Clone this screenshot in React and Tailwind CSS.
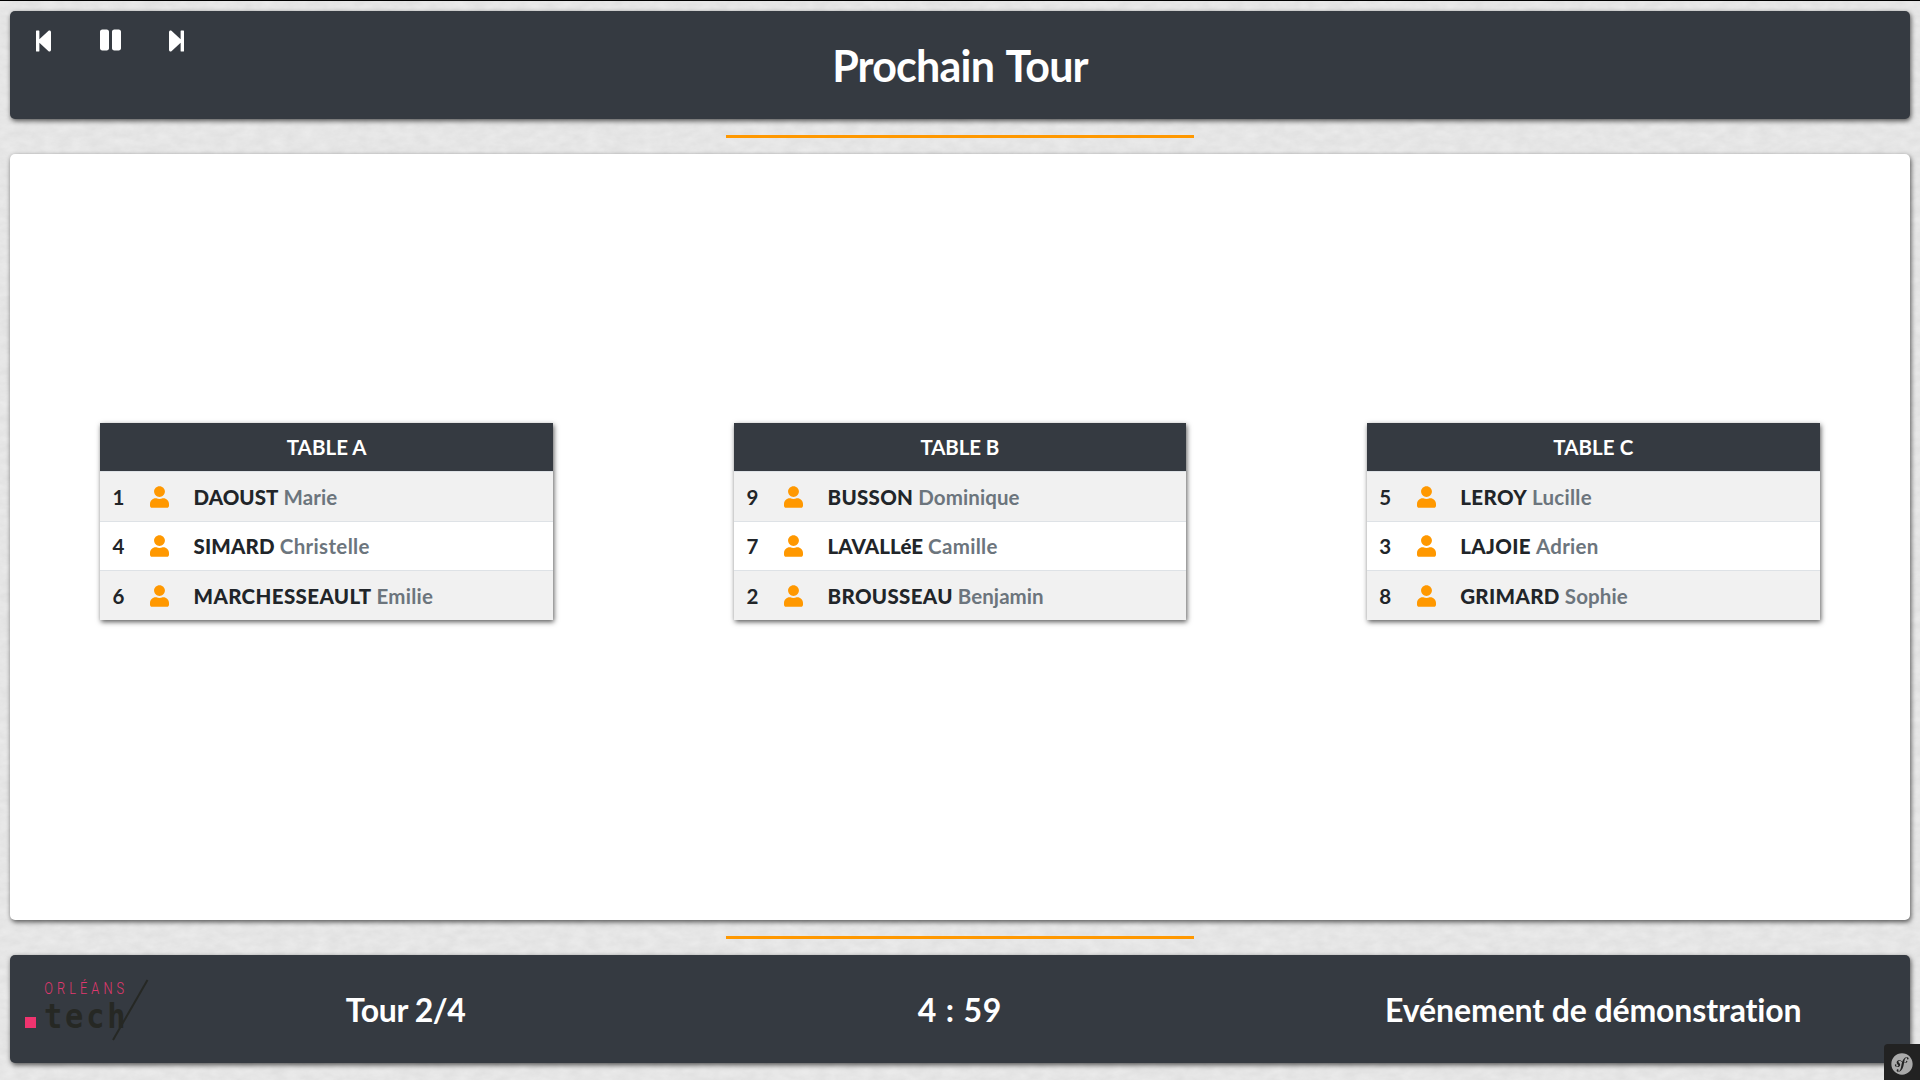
import React from "react";
import { FaStepBackward, FaPause, FaStepForward, FaUser, FaSymfony } from "react-icons/fa";

const tables = [
  {
    title: "TABLE A",
    tracking: "tracking-[0.05px]",
    margin: "mx-[90px]",
    rows: [
      { n: 1, last: "DAOUST", lt: "tracking-[0.05px]", first: "Marie", ft: "tracking-[0.12px]" },
      { n: 4, last: "SIMARD", lt: "tracking-[0.16px]", first: "Christelle", ft: "tracking-[0.34px]" },
      { n: 6, last: "MARCHESSEAULT", lt: "tracking-[0.38px]", first: "Emilie", ft: "tracking-[0.25px]" },
    ],
  },
  {
    title: "TABLE B",
    tracking: "tracking-[-0.1px]",
    margin: "mr-[91px] ml-[90.7px]",
    rows: [
      { n: 9, last: "BUSSON", lt: "tracking-[0.3px]", first: "Dominique", ft: "tracking-[0.09px]" },
      { n: 7, last: "LAVALLéE", lt: "tracking-[0.08px]", first: "Camille", ft: "tracking-[0.3px]" },
      { n: 2, last: "BROUSSEAU", lt: "tracking-[0.34px]", first: "Benjamin", ft: "tracking-[0.06px]" },
    ],
  },
  {
    title: "TABLE C",
    tracking: "tracking-[0.08px]",
    margin: "mx-[90px]",
    rows: [
      { n: 5, last: "LEROY", lt: "tracking-[0.43px]", first: "Lucille", ft: "tracking-[0.25px]" },
      { n: 3, last: "LAJOIE", lt: "tracking-[0.38px]", first: "Adrien", ft: "tracking-[0.25px]" },
      { n: 8, last: "GRIMARD", lt: "tracking-[0.35px]", first: "Sophie", ft: "tracking-[0.12px]" },
    ],
  },
];

const panel = "rounded-[5px] shadow-[1px_2px_5px_rgba(0,0,0,0.65)]";

function PaperTexture() {
  return (
    <svg className="absolute inset-0 h-full w-full" aria-hidden="true">
      <filter id="paper" x="0" y="0" width="100%" height="100%" colorInterpolationFilters="sRGB">
        <feTurbulence type="fractalNoise" baseFrequency="0.07 0.13" numOctaves="5" seed="4" />
        <feColorMatrix values="0.055 0 0 0 0.873  0.055 0 0 0 0.873  0.055 0 0 0 0.873  0 0 0 0 1" />
      </filter>
      <rect width="100%" height="100%" filter="url(#paper)" />
    </svg>
  );
}

function Logo() {
  return (
    <svg className="mt-[21px] ml-[13px] h-[68px] w-[130px] shrink-0" viewBox="23 976 130 68">
      <rect x="25" y="1017" width="11" height="11" fill="#f0346f" />
      <text
        transform="translate(44.2 994) scale(0.8 1)"
        fontFamily="Roboto, sans-serif"
        fontWeight="300"
        fontSize="16"
        letterSpacing="5.1"
        fill="#e0386f"
      >
        ORLÉANS
      </text>
      <text
        transform="translate(44 1028) scale(0.92 1)"
        fontFamily="'DejaVu Sans Mono', monospace"
        fontWeight="700"
        fontSize="33"
        letterSpacing="3.1"
        fill="#262824"
      >
        tech
      </text>
      <path d="M147.5 980 113 1040" stroke="#262824" strokeWidth="2" />
    </svg>
  );
}

function TableCard({ title, tracking, margin, rows }) {
  return (
    <section className={`bg-white shadow-[1px_2px_5px_rgba(0,0,0,0.65)] ${margin}`}>
      <h2 className={`flex h-12 items-center justify-center bg-[#353a41] pt-px text-[20.5px] leading-none text-white ${tracking}`}>
        {title}
      </h2>
      {rows.map((r, i) => (
        <div
          key={r.n}
          className={`flex items-start border-t border-[#dee2e6] pl-[12.5px] text-[20.5px] leading-[22px] text-[#212529] ${
            i % 2 ? "h-[49px] bg-white pt-[13px]" : "h-[50px] bg-[#f1f1f1] pt-[14px]"
          }`}
        >
          <span className="w-[37.5px]">{r.n}</span>
          <FaUser className="mr-[24.5px] h-[22px] w-[19px] shrink-0 text-[#ff9800]" />
          <span className={`font-black ${r.lt}`}>{r.last}</span>
          <span className={`ml-[5px] text-[#6c757d] ${r.ft}`}>{r.first}</span>
        </div>
      ))}
    </section>
  );
}

export default function App() {
  return (
    <div className="relative h-[1080px] w-[1920px] overflow-hidden bg-[#e6e6e6] font-['Lato',sans-serif] font-bold">
      <PaperTexture />
      <div className="relative flex h-full flex-col border-t border-black px-[10px] pt-[10px]">
        <header className={`grid h-[108px] shrink-0 grid-cols-3 bg-[#353a41] text-white ${panel}`}>
          <div className="flex gap-[46px] pt-[17px] pl-[23px]">
            <FaStepBackward className="mt-px h-6 w-[21px]" />
            <FaPause className="h-6 w-[21px]" />
            <FaStepForward className="mt-px -ml-px h-6 w-[21px]" />
          </div>
          <h1 className="flex items-center justify-center text-[43px] leading-none tracking-[-0.8px] [word-spacing:3px]">
            Prochain Tour
          </h1>
        </header>

        <div className="mx-auto mt-4 h-[3px] w-[468px] shrink-0 bg-[#ff9800]" />

        <main className={`mt-4 grid h-[766px] shrink-0 grid-cols-3 items-center bg-white pb-[31px] ${panel}`}>
          {tables.map((t) => (
            <TableCard key={t.title} {...t} />
          ))}
        </main>

        <div className="mx-auto mt-4 h-[3px] w-[468px] shrink-0 bg-[#ff9800]" />

        <footer className={`mt-4 grid h-[108px] shrink-0 grid-cols-3 bg-[#353a41] text-[32px] leading-none text-white ${panel}`}>
          <div className="flex">
            <Logo />
            <div className="ml-[15px] flex flex-1 items-center justify-center pt-[2px] tracking-[-0.4px]">Tour 2/4</div>
          </div>
          <div className="flex items-center justify-center pt-[2px] tracking-[0.8px]">4 : 59</div>
          <div className="flex items-center justify-center pt-[2px] tracking-[-0.12px]">Evénement de démonstration</div>
        </footer>
      </div>

      <div className="absolute right-0 bottom-0 flex h-9 w-9 items-center justify-center rounded-tl-[4px] bg-[#222]">
        <FaSymfony className="mt-1 h-[22px] w-[22px] text-[#aaa]" />
      </div>
    </div>
  );
}
